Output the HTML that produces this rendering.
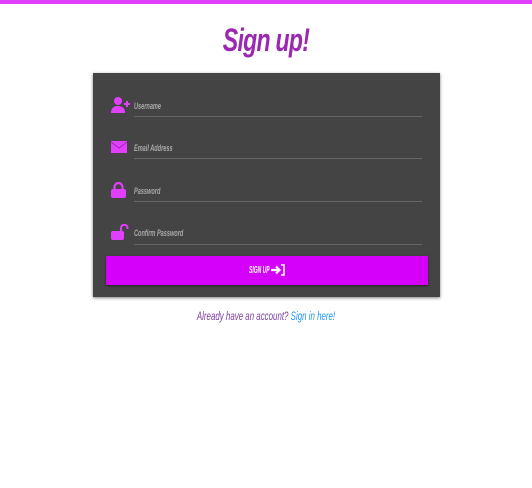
<!DOCTYPE html>
<html><head><style>
body{margin:0;width:532px;height:488px;background:#fff;position:relative;overflow:hidden;font-family:"Liberation Sans",sans-serif}
.bar{position:absolute;left:0;top:0;width:532px;height:4px;background:#e040fb}
.t{position:absolute;left:0;width:532px;text-align:center;top:22px;font-size:32px;font-weight:bold;font-style:italic;color:#9c27b0;transform:scaleX(.72);letter-spacing:-1px}
.card{position:absolute;left:93px;top:73px;width:347px;height:224px;background:#444;box-shadow:0 1px 3px rgba(0,0,0,.5)}
.line{position:absolute;left:134px;width:288px;height:1px;background:#666}
.lb{position:absolute;left:134px;font-size:9px;font-weight:bold;font-style:italic;color:#aaa;transform:scaleX(.62);transform-origin:left}
.ic{position:absolute;left:111px}
.btn{position:absolute;left:106px;top:256px;width:322px;height:29px;background:#d500f9;box-shadow:0 1px 2px rgba(0,0,0,.5)}
.bt{position:absolute;left:249px;top:265px;font-size:10px;font-weight:bold;font-style:italic;color:#fff;transform:scaleX(.5);transform-origin:left}
.ft{position:absolute;left:0;width:532px;text-align:center;top:309px;font-size:12px;font-style:italic;color:#7b3fa0;transform:scaleX(.66)}
.ft span{color:#2196f3}
</style></head><body>
<div class="bar"></div>
<div class="t">Sign up!</div>
<div class="card"></div>
<svg class="ic" style="top:97px" width="20" height="17" viewBox="0 0 20 17"><circle cx="7" cy="4" r="4" fill="#e040fb"/><path d="M0 16 Q0 9 7 9 Q14 9 14 16Z" fill="#e040fb"/><path d="M13 7h6M16 4v6" stroke="#e040fb" stroke-width="2"/></svg>
<div class="lb" style="top:101px">Username</div><div class="line" style="top:116px"></div>
<svg class="ic" style="top:141px" width="16" height="12" viewBox="0 0 16 12"><rect width="16" height="12" fill="#e040fb"/><path d="M0 1l8 6 8-6" stroke="#9c27b0" fill="none" stroke-width="1"/></svg>
<div class="lb" style="top:143px">Email Address</div><div class="line" style="top:158px"></div>
<svg class="ic" style="top:182px" width="15" height="16" viewBox="0 0 15 16"><path d="M3.5 7V5a4 4 0 0 1 8 0v2" stroke="#e040fb" stroke-width="2.2" fill="none"/><rect x="0" y="7" width="15" height="9" rx="2" fill="#e040fb"/></svg>
<div class="lb" style="top:186px">Password</div><div class="line" style="top:201px"></div>
<svg class="ic" style="top:224px" width="18" height="16" viewBox="0 0 18 16"><path d="M10 7V4a3.2 3.2 0 0 1 6.5 0v1" stroke="#e040fb" stroke-width="2" fill="none"/><rect x="0" y="7" width="13" height="9" rx="2" fill="#e040fb"/></svg>
<div class="lb" style="top:228px">Confirm Password</div><div class="line" style="top:244px"></div>
<div class="btn"></div>
<div class="bt">SIGN UP</div>
<svg style="position:absolute;left:271px;top:264px" width="15" height="12" viewBox="0 0 15 12"><path d="M0 6h8M5 2.5l3.5 3.5L5 9.5" stroke="#fff" stroke-width="2.2" fill="none"/><path d="M10 1h3v10h-3" stroke="#fff" stroke-width="1.6" fill="none"/></svg>
<div class="ft">Already have an account? <span>Sign in here!</span></div>
</body></html>
